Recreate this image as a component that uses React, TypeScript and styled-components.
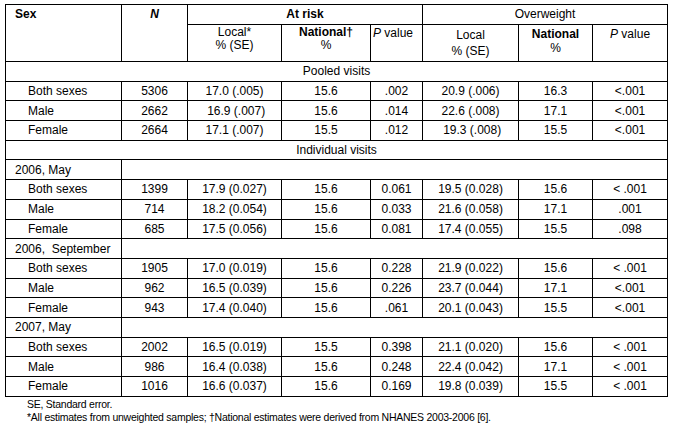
import React, { FC, ReactNode } from "react";
import styled, { createGlobalStyle } from "styled-components";

// Styles
const GlobalStyle = createGlobalStyle`
  body {
    margin: 0;
    background: #fff;
    font-family: "Liberation Sans", Arial, sans-serif;
    color: #000;
  }
`;

const Page = styled.div`
  padding: 4px 0 0 5px;
`;

const Table = styled.table`
  border-collapse: collapse;
  table-layout: fixed;
  width: 663px;
  font-size: 12px;
`;

const HeadCell = styled.th<{ $align?: string; $bold?: boolean; $pad?: string; $lh?: string }>`
  border: 1px solid #000;
  padding: ${(p) => p.$pad || "2px 2px 0"};
  text-align: ${(p) => p.$align || "center"};
  vertical-align: top;
  font-weight: ${(p) => (p.$bold ? "bold" : "normal")};
  line-height: ${(p) => p.$lh || "14px"};
`;

const Row = styled.tr<{ $h?: number }>`
  height: ${(p) => p.$h || 19.7}px;
`;

const Cell = styled.td`
  border: 1px solid #000;
  padding: 0 2px;
  text-align: center;
  vertical-align: middle;
  white-space: pre;
  line-height: 14px;
`;

const LabelCell = styled(Cell)<{ $indent?: boolean }>`
  text-align: left;
  padding-left: ${(p) => (p.$indent ? "22px" : "9px")};
`;

const GroupCell = styled(Cell)``;

const Light = styled.span`
  font-weight: normal;
`;

const Footer = styled.div`
  padding: 1px 0 0 22px;
  font-size: 10.5px;
  line-height: 13px;
  letter-spacing: -0.25px;
`;

// Data
type DataRow = [string, string, string, string, string, string, string, string];

interface Section {
  title?: string;
  subtitle?: string;
  rows: DataRow[];
}

const sections: Section[] = [
  {
    title: "Pooled visits",
    rows: [
      ["Both sexes", "5306", "17.0 (.005)", "15.6", ".002", "20.9 (.006)", "16.3", "<.001"],
      ["Male", "2662", " 16.9 (.007)", "15.6", ".014", "22.6 (.008)", "17.1", "<.001"],
      ["Female", "2664", "17.1 (.007)", "15.5", ".012", " 19.3 (.008)", "15.5", "<.001"],
    ],
  },
  {
    title: "Individual visits",
    subtitle: "2006, May",
    rows: [
      ["Both sexes", "1399", "17.9 (0.027)", "15.6", "0.061", "19.5 (0.028)", "15.6", "< .001"],
      ["Male", "714", "18.2 (0.054)", "15.6", "0.033", "21.6 (0.058)", "17.1", ".001"],
      ["Female", "685", "17.5 (0.056)", "15.6", "0.081", "17.4 (0.055)", "15.5", ".098"],
    ],
  },
  {
    subtitle: "2006,  September",
    rows: [
      ["Both sexes", "1905", "17.0 (0.019)", "15.6", "0.228", "21.9 (0.022)", "15.6", "< .001"],
      ["Male", "962", "16.5 (0.039)", "15.6", "0.226", "23.7 (0.044)", "17.1", "<.001"],
      ["Female", "943", "17.4 (0.040)", "15.6", ".061", "20.1 (0.043)", "15.5", "<.001"],
    ],
  },
  {
    subtitle: "2007, May",
    rows: [
      ["Both sexes", "2002", "16.5 (0.019)", "15.5", "0.398", "21.1 (0.020)", "15.6", "< .001"],
      ["Male", "986", "16.4 (0.038)", "15.6", "0.248", "22.4 (0.042)", "17.1", "< .001"],
      ["Female", "1016", "16.6 (0.037)", "15.6", "0.169", "19.8 (0.039)", "15.5", "< .001"],
    ],
  },
];

const widths = [116, 66, 94, 89, 52, 96, 74, 75];

const PValue: FC = () => (
  <>
    <i>P</i> value
  </>
);

const Stacked: FC<{ top: ReactNode; bottom: ReactNode }> = ({ top, bottom }) => (
  <>
    {top}
    <br />
    {bottom}
  </>
);

const App: FC = () => (
  <Page>
    <GlobalStyle />
    <Table>
      <colgroup>
        {widths.map((w, i) => (
          <col key={i} style={{ width: w }} />
        ))}
      </colgroup>
      <thead>
        <tr style={{ height: 20 }}>
          <HeadCell rowSpan={2} $align="left" $bold $pad="2px 2px 0 9px">
            Sex
          </HeadCell>
          <HeadCell rowSpan={2} $bold>
            <i>N</i>
          </HeadCell>
          <HeadCell colSpan={3} $bold>
            At risk
          </HeadCell>
          <HeadCell colSpan={3}>Overweight</HeadCell>
        </tr>
        <tr style={{ height: 37 }}>
          <HeadCell $pad="1px 2px 0" $lh="12.5px">
            <Stacked top="Local*" bottom="% (SE)" />
          </HeadCell>
          <HeadCell $bold $pad="1px 2px 0" $lh="12.5px">
            <Stacked top="National†" bottom={<Light>%</Light>} />
          </HeadCell>
          <HeadCell $align="left" $pad="1px 2px 0">
            <PValue />
          </HeadCell>
          <HeadCell $pad="2px 2px 0" $lh="16px">
            <Stacked top="Local" bottom="% (SE)" />
          </HeadCell>
          <HeadCell $bold $pad="2px 2px 0" $lh="14px">
            <Stacked top="National" bottom={<Light>%</Light>} />
          </HeadCell>
          <HeadCell $pad="2px 2px 0">
            <PValue />
          </HeadCell>
        </tr>
      </thead>
      <tbody>
        {sections.map((s, si) => (
          <React.Fragment key={si}>
            {s.title && (
              <Row>
                <GroupCell colSpan={8}>{s.title}</GroupCell>
              </Row>
            )}
            {s.subtitle && (
              <Row>
                <LabelCell>{s.subtitle}</LabelCell>
                <Cell colSpan={7} />
              </Row>
            )}
            {s.rows.map((r, ri) => (
              <Row key={ri}>
                <LabelCell $indent>{r[0]}</LabelCell>
                {r.slice(1).map((v, vi) => (
                  <Cell key={vi}>{v}</Cell>
                ))}
              </Row>
            ))}
          </React.Fragment>
        ))}
      </tbody>
    </Table>
    <Footer>
      SE, Standard error.
      <br />
      *All estimates from unweighted samples; †National estimates were derived from NHANES 2003-2006 [6].
    </Footer>
  </Page>
);

export default App;
